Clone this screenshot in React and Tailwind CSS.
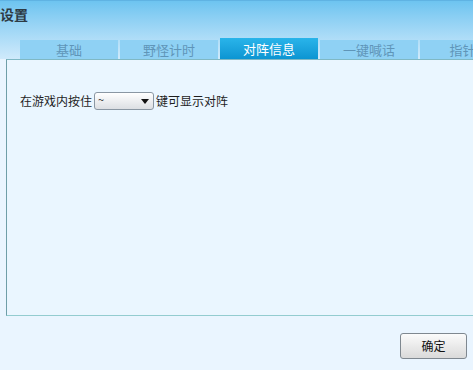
const tabs = ["基础", "野怪计时", "对阵信息", "一键喊话", "指针给"];

export default function App() {
  const font = { fontFamily: '"Noto Sans CJK SC", "Liberation Sans", sans-serif' };
  return (
    <div
      className="w-[473px] h-[370px] overflow-hidden bg-[#eaf5ff] flex flex-col"
      style={font}
    >
      {/* header */}
      <div className="h-[59px] flex flex-col bg-gradient-to-b from-[#6dc4f0] to-[#cfeafb] border-t border-[#5fb3e3]">
        <div className="h-[38px] pt-[3px] text-[14px] font-bold text-[#2d3a44] leading-[20px]">设置</div>
        <div className="flex items-end gap-[2px] pl-[20px] flex-1">
          {tabs.map((t, i) =>
            i === 2 ? (
              <div
                key={t}
                className="w-[98px] h-[21px] shrink-0 flex items-center justify-center text-[13px] text-white bg-gradient-to-b from-[#29b4ea] to-[#0b95d2]"
              >
                {t}
              </div>
            ) : (
              <div
                key={t}
                className="w-[98px] h-[19px] shrink-0 flex items-center justify-center text-[13px] text-[#5f95b8] bg-[#8fd1f4]"
              >
                {t}
              </div>
            )
          )}
        </div>
      </div>

      {/* panel */}
      <div className="ml-[6px] w-[480px] h-[257px] shrink-0 bg-[#eaf6ff] border-l border-t border-b border-l-[#6f9ea8] border-t-[#7fb8c4] border-b-[#93ccd0]">
        <div className="flex items-center pl-[13px] pt-[32px] text-[12px] text-[#1e1e1e]">
          <span>在游戏内按住</span>
          <div className="ml-[2px] mr-[2px] w-[60px] h-[18px] rounded-[3px] border border-[#8a97a3] bg-gradient-to-b from-white to-[#dcdfe3] flex items-start justify-between pl-[3px] pr-[4px]">
            <span className="text-[11px] leading-[12px] text-[#333]">~</span>
            <svg width="8" height="5" viewBox="0 0 8 5" className="mt-[6px]">
              <path d="M0 0H8L4 5Z" fill="#111" />
            </svg>
          </div>
          <span>键可显示对阵</span>
        </div>
      </div>

      {/* footer */}
      <div className="flex justify-end pr-[6px] pt-[17px]">
        <button className="w-[67px] h-[26px] rounded-[3px] border border-[#7f8890] bg-gradient-to-b from-[#fbfbfb] to-[#dadada] text-[12px] text-[#111]">
          确定
        </button>
      </div>
    </div>
  );
}
